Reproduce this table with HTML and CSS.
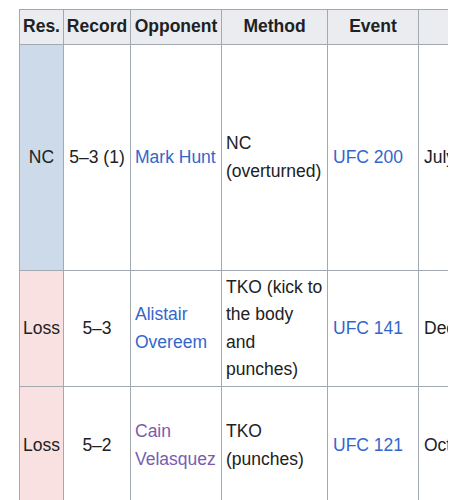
FILE: index.html
```html
<!DOCTYPE html>
<html lang="en">
<head>
<meta charset="utf-8">
<title>MMA record</title>
<link rel="stylesheet" href="styles.css">
</head>
<body>
<div class="scroller">
  <table class="record">
    <colgroup>
      <col class="c-res">
      <col class="c-rec">
      <col class="c-opp">
      <col class="c-meth">
      <col class="c-event">
      <col class="c-date">
      <col class="c-round">
      <col class="c-loc">
    </colgroup>
    <thead>
      <tr class="head">
        <th>Res.</th>
        <th>Record</th>
        <th>Opponent</th>
        <th>Method</th>
        <th>Event</th>
        <th>Date</th>
        <th>Round</th>
        <th>Location</th>
      </tr>
    </thead>
    <tbody>
      <tr class="r1">
        <td class="res nc">NC</td>
        <td class="rec">5–3 (1)</td>
        <td class="opp"><a href="#">Mark Hunt</a></td>
        <td>NC (overturned)</td>
        <td class="ev"><a href="#">UFC 200</a></td>
        <td class="date">July 9, 2016</td>
        <td>3</td>
        <td>Las Vegas, Nevada, United States</td>
      </tr>
      <tr class="r2">
        <td class="res loss">Loss</td>
        <td class="rec">5–3</td>
        <td class="opp"><a href="#">Alistair Overeem</a></td>
        <td>TKO (kick to the body and punches)</td>
        <td class="ev"><a href="#">UFC 141</a></td>
        <td class="date">December 30, 2011</td>
        <td>1</td>
        <td>Las Vegas, Nevada, United States</td>
      </tr>
      <tr class="r3">
        <td class="res loss">Loss</td>
        <td class="rec">5–2</td>
        <td class="opp"><a href="#" class="visited">Cain Velasquez</a></td>
        <td>TKO (punches)</td>
        <td class="ev"><a href="#">UFC 121</a></td>
        <td class="date">October 23, 2010</td>
        <td>1</td>
        <td>Anaheim, California, United States</td>
      </tr>
    </tbody>
  </table>
</div>
</body>
</html>
```

FILE: styles.css
```css
html, body {
  margin: 0;
  padding: 0;
  background: #ffffff;
}

body {
  font-family: "Liberation Sans", Arial, sans-serif;
  font-size: 17.5px;
  line-height: 27.5px;
  color: #202122;
}

.scroller {
  margin: 9px 0 0 19px;
  width: 429px;
  overflow: hidden;
}

.record {
  border-collapse: collapse;
  table-layout: fixed;
  width: 896px;
}

.c-res { width: 44px; }
.c-rec { width: 67px; }
.c-opp { width: 91px; }
.c-meth { width: 106px; }
.c-event { width: 91px; }
.c-date { width: 170px; }
.c-round { width: 70px; }
.c-loc { width: 257px; }

.record th,
.record td {
  border: 1px solid #a2a9b1;
  padding: 0 4px;
  vertical-align: middle;
  text-align: left;
}

.record th {
  background: #eaecf0;
  font-weight: bold;
  text-align: center;
  padding: 0 2px;
  white-space: nowrap;
}

.head { height: 35px; }
.r1 { height: 226px; }
.r2 { height: 116px; }
.r3 { height: 118px; }

.record td.res {
  text-align: center;
  padding: 0 2px;
}

.record td.rec {
  text-align: center;
  padding: 0 2px;
}

.record td.opp {
  padding: 0 2px 0 4px;
}

.record td.ev {
  padding: 0 4px 0 5px;
}

.record td.date {
  white-space: nowrap;
  padding: 0 4px 0 5px;
}

.nc { background: #cddaea; }
.loss { background: #fae1e1; }

a {
  color: #3366cc;
  text-decoration: none;
}

a.visited {
  color: #795cb2;
}
```
